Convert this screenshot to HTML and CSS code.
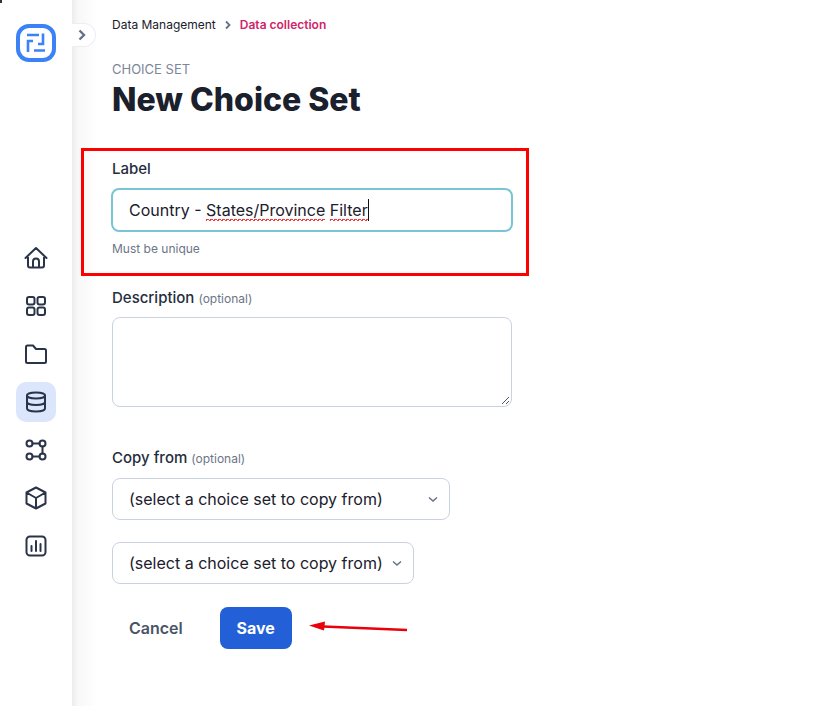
FILE: index.html
```html
<!DOCTYPE html>
<html lang="en">
<head>
<meta charset="utf-8">
<title>New Choice Set</title>
<link rel="stylesheet" href="styles.css">
</head>
<body>
<div class="app">
  <aside class="sidebar">
    <span class="corner-mark"></span>
    <svg class="logo" viewBox="0 0 40 38" fill="none">
      <rect x="2" y="2" width="36" height="34" rx="11" stroke="#3b82f6" stroke-width="4"/>
      <path d="M11 11h12M27 9.500V20h-5M17 17h-5v11M18 26.500h11" stroke="#3b82f6" stroke-width="2.600"/>
    </svg>
    <nav class="nav">
      <a class="nav-item"><svg viewBox="0 0 24 24"><path d="M1.500 12 12 2l10.500 10M4 9.500v10A2 2 0 0 0 6 21.500h12a2 2 0 0 0 2-2v-10M9 21.500v-6a3 3 0 0 1 6 0v6"/></svg></a>
      <a class="nav-item"><svg viewBox="0 0 24 24"><rect x="3" y="3" width="7.500" height="7.500" rx="2"/><rect x="13.500" y="3" width="7.500" height="7.500" rx="2"/><rect x="3" y="13.500" width="7.500" height="7.500" rx="2"/><rect x="13.500" y="13.500" width="7.500" height="7.500" rx="2"/></svg></a>
      <a class="nav-item"><svg viewBox="0 0 24 24"><path d="M2 5a1.500 1.500 0 0 1 1.500-1.500H9l3 3.500h8.500A1.500 1.500 0 0 1 22 8.500v11a1.500 1.500 0 0 1-1.500 1.500h-17A1.500 1.500 0 0 1 2 19.500Z"/></svg></a>
      <a class="nav-item active"><svg viewBox="0 0 24 24"><ellipse cx="12" cy="5.500" rx="9" ry="3"/><path d="M3 5.500v13c0 1.700 4 3 9 3s9-1.300 9-3v-13M3 12c0 1.700 4 3 9 3s9-1.300 9-3"/></svg></a>
      <a class="nav-item"><svg viewBox="0 0 24 24"><circle cx="5.500" cy="5.500" r="3"/><circle cx="18.500" cy="5.500" r="3"/><circle cx="5.500" cy="18.500" r="3"/><circle cx="18.500" cy="18.500" r="3"/><path d="M8.500 5.500h7M18.500 8.500v7M8.500 18.500h7"/></svg></a>
      <a class="nav-item"><svg viewBox="0 0 24 24"><path d="M12 1.500 21.500 6.500v11L12 22.500 2.500 17.500v-11ZM2.500 6.500 12 12l9.500-5.500M12 12v10.500"/></svg></a>
      <a class="nav-item"><svg viewBox="0 0 24 24"><rect x="2.500" y="2.500" width="19" height="19" rx="3.500"/><path d="M7.500 17v-5M12 17V7M16.500 17v-7"/></svg></a>
    </nav>
  </aside>
  <main class="main">
    <button class="toggle"><svg viewBox="0 0 12 12"><path d="M3.500 1.500 8 6l-4.500 4.500"/></svg></button>
    <div class="breadcrumb">
      <span>Data Management</span>
      <svg class="crumb-sep" viewBox="0 0 10 10"><path d="M3 1.500 6.500 5 3 8.500"/></svg>
      <span class="crumb-current">Data collection</span>
    </div>
    <p class="eyebrow">CHOICE SET</p>
    <h1 class="title">New Choice Set</h1>
    <form class="form">
      <div class="field field-label">
        <div class="label">Label</div>
        <div class="input focused"><span>Country - <span class="typo">States/Province</span> <span class="typo">Filter</span></span><i class="caret"></i></div>
        <div class="hint">Must be unique</div>
      </div>
      <div class="field field-desc">
        <div class="label">Description <small>(optional)</small></div>
        <div class="textarea">
          <svg class="grip" viewBox="0 0 10 10"><path d="M9 2 2 9M9 6 6 9"/></svg>
        </div>
      </div>
      <div class="field field-copy">
        <div class="label">Copy from <small>(optional)</small></div>
        <div class="select select-wide"><span>(select a choice set to copy from)</span><svg class="chev" viewBox="0 0 12 12"><path d="M2 4.500 6 8l4-3.500"/></svg></div>
        <div class="select select-narrow"><span>(select a choice set to copy from)</span><svg class="chev" viewBox="0 0 12 12"><path d="M2 4.500 6 8l4-3.500"/></svg></div>
      </div>
      <div class="actions">
        <a class="btn-cancel">Cancel</a>
        <a class="btn-save">Save</a>
      </div>
    </form>
    <div class="annot-box"></div>
    <svg class="annot-arrow" viewBox="0 0 100 14"><path d="M98 9 14 5.500" /><path class="head" d="M0 4.500 16 0.500 15 9.500Z"/></svg>
  </main>
</div>
</body>
</html>
```
FILE: styles.css
```css
* { box-sizing: border-box; }
html, body { margin: 0; height: 100%; }
body { font-family: Inter, "Liberation Sans", sans-serif; color: #1a202c; background: #fff; overflow: hidden; }
.app { display: flex; width: 818px; height: 706px; }

.sidebar { position: relative; width: 72px; flex: none; display: flex; flex-direction: column; align-items: center; background: #fff; padding-top: 24px; }
.corner-mark { position: absolute; left: 0; top: 0; width: 2px; height: 3px; background: #333; }
.logo { width: 40px; height: 38px; flex: none; }
.nav { display: flex; flex-direction: column; gap: 8px; margin-top: 176px; }
.nav-item { width: 40px; height: 40px; display: flex; align-items: center; justify-content: center; border-radius: 10px; }
.nav-item.active { background: #dbe6fc; }
.nav-item svg { width: 24px; height: 24px; fill: none; stroke: #2a3448; stroke-width: 2; stroke-linecap: round; stroke-linejoin: round; }

.main { position: relative; flex: 1; padding: 17px 0 0 40px; background: linear-gradient(90deg, #ececec 0, #f8f8f8 6px, #ffffff 26px); }
.toggle { position: absolute; left: 0; top: 23px; width: 24px; height: 24px; padding: 0 4px 0 0; display: flex; align-items: center; justify-content: center; background: #fff; border: 1px solid #eceef3; border-left: none; border-radius: 0 12px 12px 0; }
.toggle svg { width: 12px; height: 12px; fill: none; stroke: #66708a; stroke-width: 2.400; }

.breadcrumb { display: flex; align-items: center; height: 16px; font-size: 12px; line-height: 16px; color: #1a202c; }
.crumb-sep { width: 10px; height: 10px; margin: 0 7px 0 7px; fill: none; stroke: #66708a; stroke-width: 1.800; }
.crumb-current { color: #d0246b; font-weight: 600; }

.eyebrow { margin: 28px 0 0; font-size: 13px; line-height: 16px; color: #7c8698; }
.title { margin: 3px 0 0; font-size: 32px; line-height: 40px; font-weight: 800; color: #1a202c; letter-spacing: 0; }

.form { display: flex; flex-direction: column; width: 400px; margin-top: 39px; }
.field { display: flex; flex-direction: column; }
.label { font-size: 15px; line-height: 20px; font-weight: 500; color: #252d3d; }
.label small { font-size: 12px; font-weight: 400; color: #6b7587; }
.input { display: flex; align-items: center; height: 44px; margin: 9px -1px 0; padding: 0 16px; border: 2px solid #7ac4d8; border-radius: 8px; font-size: 16px; color: #1a202c; }
.typo { padding-bottom: 2px; background-image: linear-gradient(45deg, transparent 60%, #f5383c 60% 85%, transparent 85%), linear-gradient(135deg, transparent 10%, #f5383c 10% 40%, transparent 40%); background-size: 4px 3px; background-repeat: repeat-x; background-position: left bottom; }
.caret { width: 1px; height: 22px; background: #111; }
.hint { margin-top: 9px; font-size: 12px; line-height: 16px; color: #6b7587; }
.field-desc { margin-top: 31px; }
.textarea { position: relative; height: 90px; margin-top: 8px; border: 1px solid #cbd2df; border-radius: 8px; }
.grip { position: absolute; right: 1px; bottom: 1px; width: 10px; height: 10px; fill: none; stroke: #555; stroke-width: 1; }
.field-copy { margin-top: 41px; }
.select { display: flex; align-items: center; justify-content: space-between; height: 42px; padding: 0 10px 0 16px; border: 1px solid #cbd2df; border-radius: 8px; font-size: 16px; color: #1a202c; }
.select-wide { width: 338px; margin-top: 9px; }
.select-narrow { width: 302px; margin-top: 22px; }
.chev { width: 12px; height: 12px; fill: none; stroke: #66708a; stroke-width: 1.500; }

.actions { display: flex; align-items: center; gap: 37px; margin-top: 23px; padding-left: 17px; }
.btn-cancel { font-size: 16px; font-weight: 600; color: #4a5568; }
.btn-save { display: flex; align-items: center; justify-content: center; width: 72px; height: 42px; background: #2360d8; border-radius: 8px; color: #fff; font-size: 16px; font-weight: 700; }

.annot-box { position: absolute; left: 9px; top: 148px; width: 448px; height: 128px; border: 3px solid #f00; }
.annot-arrow { position: absolute; left: 237px; top: 621px; width: 100px; height: 14px; fill: none; stroke: #e8000a; stroke-width: 2.500; }
.annot-arrow .head { fill: #e8000a; stroke: none; }
```
